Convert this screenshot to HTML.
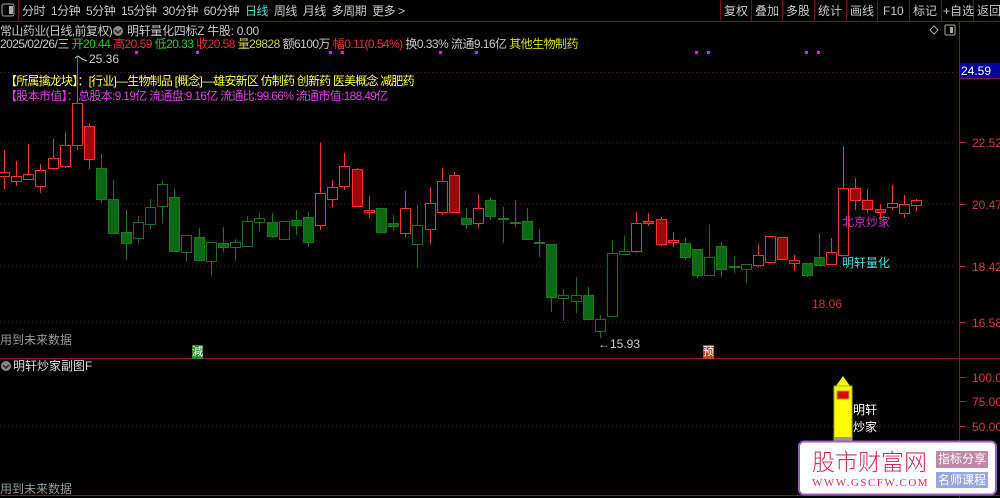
<!DOCTYPE html>
<html><head><meta charset="utf-8"><style>
html,body{margin:0;padding:0;background:#000;width:1000px;height:498px;overflow:hidden;font-family:"Liberation Sans","Noto Sans CJK SC",sans-serif;font-size:12px}
.t{position:absolute;white-space:nowrap;line-height:14px}
</style></head><body>
<svg id="s" width="1000" height="498" style="position:absolute;left:0;top:0" xmlns="http://www.w3.org/2000/svg">
<rect width="1000" height="498" fill="#000"/>
<rect x="0" y="0" width="1000" height="21" fill="#000"/>
<line x1="0" y1="21.5" x2="1000" y2="21.5" stroke="#7a1010"/>
<rect x="2" y="4" width="12" height="12" fill="none" stroke="#aaa" rx="2"/><rect x="9" y="6" width="4" height="8" fill="#aaa"/>
<line x1="18.5" y1="0" x2="18.5" y2="21" stroke="#7a1010"/>
<g stroke="#7a1010"><line x1="720.5" y1="0" x2="720.5" y2="21"/><line x1="751.5" y1="0" x2="751.5" y2="21"/><line x1="782.5" y1="0" x2="782.5" y2="21"/><line x1="814.5" y1="0" x2="814.5" y2="21"/><line x1="846.5" y1="0" x2="846.5" y2="21"/><line x1="877.5" y1="0" x2="877.5" y2="21"/><line x1="909.5" y1="0" x2="909.5" y2="21"/><line x1="941.5" y1="0" x2="941.5" y2="21"/><line x1="973.5" y1="0" x2="973.5" y2="21"/></g>
<line x1="959.5" y1="22" x2="959.5" y2="498" stroke="#8a1a1a"/>
<line x1="0" y1="358.5" x2="1000" y2="358.5" stroke="#8a1a1a"/>
<line x1="0" y1="495.5" x2="1000" y2="495.5" stroke="#8a1a1a"/>
<g stroke="#6a1a1a" stroke-dasharray="1,3">
<line x1="0" y1="72.5" x2="959" y2="72.5"/><line x1="0" y1="142.5" x2="959" y2="142.5"/><line x1="0" y1="204.5" x2="959" y2="204.5"/><line x1="0" y1="266.5" x2="959" y2="266.5"/><line x1="0" y1="322.5" x2="959" y2="322.5"/><line x1="0" y1="426.5" x2="959" y2="426.5"/>
</g>
<g stroke="#aa2a2a"><line x1="960" y1="142.5" x2="966" y2="142.5"/><line x1="960" y1="204.5" x2="966" y2="204.5"/><line x1="960" y1="266.5" x2="966" y2="266.5"/><line x1="960" y1="322.5" x2="966" y2="322.5"/><line x1="960" y1="377.5" x2="966" y2="377.5"/><line x1="960" y1="401.5" x2="966" y2="401.5"/><line x1="960" y1="426.5" x2="966" y2="426.5"/></g>
<rect x="960" y="63" width="40" height="15" fill="#0000a0"/>
<line x1="960" y1="78.5" x2="1000" y2="78.5" stroke="#8a1a1a"/>
<path d="M934 26 L938 30 L934 34 L930 30 Z" fill="none" stroke="#aaa"/>
<rect x="945" y="25" width="10" height="10" fill="none" stroke="#aaa" rx="1"/><rect x="950" y="27" width="3" height="6" fill="#aaa"/>
<circle cx="118" cy="31" r="5" fill="#888"/><path d="M115 30 L118 33 L121 30" stroke="#222" fill="none" stroke-width="1.5"/>
<circle cx="6" cy="366" r="5" fill="#888"/><path d="M3 365 L6 368 L9 365" stroke="#222" fill="none" stroke-width="1.5"/>
<g fill="#e020e0"><rect x="135" y="51" width="3" height="3"/><rect x="196" y="51" width="3" height="3"/><rect x="329" y="51" width="3" height="3"/><rect x="341" y="51" width="3" height="3"/><rect x="439" y="51" width="3" height="3"/><rect x="475" y="51" width="3" height="3"/><rect x="695" y="51" width="3" height="3"/><rect x="707" y="51" width="3" height="3"/><rect x="805" y="51" width="3" height="3"/><rect x="817" y="51" width="3" height="3"/></g>
<g id="c"></g>
<path d="M75 58 L78 56 L82 59 L87 61" stroke="#ccc" fill="none"/>
<path d="M836 386 L843 376 L850 386 Z" fill="#ffff00"/>
<rect x="834" y="386" width="18" height="54" fill="#ffff00" stroke="#aaaa00"/>
<rect x="837" y="391" width="12" height="8" fill="#dd0000" stroke="#aaaa00"/>
<rect x="834" y="437" width="18" height="4" fill="#999"/>
<rect x="799" y="441.5" width="197" height="53" rx="5" fill="#fff" stroke="#9a5cc8" stroke-width="2"/>
<rect x="936" y="451" width="52" height="17" fill="#c089a8"/>
<rect x="936" y="472" width="52" height="16" fill="#96a8e0"/>
</svg>
<div class="t" style="left:22px;top:4px;color:#c8c8c8;letter-spacing:-0.45px">分时&nbsp; 1分钟&nbsp; 5分钟&nbsp; 15分钟&nbsp; 30分钟&nbsp; 60分钟&nbsp; <span style="color:#4dd">日线</span>&nbsp; 周线&nbsp; 月线&nbsp; 多周期&nbsp; 更多 &gt;</div>
<div class="t" style="left:724px;top:4px;color:#c8c8c8">复权</div>
<div class="t" style="left:755px;top:4px;color:#c8c8c8">叠加</div>
<div class="t" style="left:786px;top:4px;color:#c8c8c8">多股</div>
<div class="t" style="left:818px;top:4px;color:#c8c8c8">统计</div>
<div class="t" style="left:850px;top:4px;color:#c8c8c8">画线</div>
<div class="t" style="left:883px;top:4px;color:#c8c8c8">F10</div>
<div class="t" style="left:913px;top:4px;color:#c8c8c8">标记</div>
<div class="t" style="left:943px;top:4px;color:#c8c8c8">+自选</div>
<div class="t" style="left:977px;top:4px;color:#c8c8c8">返回</div>
<div class="t" style="left:0;top:24px;color:#c8c8c8;letter-spacing:-0.6px">常山药业(日线,前复权)</div>
<div class="t" style="left:127px;top:24px;color:#c8c8c8;letter-spacing:-0.3px">明轩量化四标Z 牛股: 0.00</div>
<div class="t" style="left:0;top:37px;color:#c8c8c8;letter-spacing:-0.55px">2025/02/26/三 <span style="color:#2c2">开20.44</span> <span style="color:#e33">高20.59</span> <span style="color:#2c2">低20.33</span> <span style="color:#e33">收20.58</span> <span style="color:#cc4">量29828</span> 额6100万 <span style="color:#e33">幅0.11(0.54%)</span> 换0.33% 流通9.16亿 <span style="color:#dd0">其他生物制药</span></div>
<div class="t" style="left:89px;top:52px;color:#ccc">25.36</div>
<div class="t" style="left:5px;top:74px;color:#ffff40;letter-spacing:-0.8px">【所属擒龙块】：[行业]—生物制品 [概念]—雄安新区 仿制药 创新药 医美概念 减肥药</div>
<div class="t" style="left:5px;top:89px;color:#e040e0;letter-spacing:-0.7px">【股本市值】：总股本:9.19亿 流通盘:9.16亿 流通比:99.66% 流通市值:188.49亿</div>
<div class="t" style="left:961px;top:64px;color:#fff">24.59</div>
<div class="t" style="left:972px;top:136px;color:#d04040">22.52</div>
<div class="t" style="left:972px;top:198px;color:#d04040">20.47</div>
<div class="t" style="left:972px;top:260px;color:#d04040">18.42</div>
<div class="t" style="left:972px;top:316px;color:#d04040">16.58</div>
<div class="t" style="left:972px;top:371px;color:#d04040">100.0</div>
<div class="t" style="left:972px;top:395px;color:#d04040">75.00</div>
<div class="t" style="left:972px;top:420px;color:#d04040">50.00</div>
<div class="t" style="left:842px;top:215px;color:#d030d0">北京炒家</div>
<div class="t" style="left:842px;top:256px;color:#40e0e0">明轩量化</div>
<div class="t" style="left:812px;top:297px;color:#d03030">18.06</div>
<div class="t" style="left:598px;top:337px;color:#ccc">←15.93</div>
<div class="t" style="left:0;top:333px;color:#999">用到未来数据</div>
<div class="t" style="left:0;top:482px;color:#999">用到未来数据</div>
<div class="t" style="left:192px;top:345px;color:#fff;background:#2a8a2a;font-size:11px">減</div>
<div class="t" style="left:703px;top:345px;color:#fff;background:#c04020;font-size:11px">预</div>
<div class="t" style="left:13px;top:359px;color:#ddd">明轩炒家副图F</div>
<div class="t" style="left:853px;top:403px;color:#fff">明轩</div>
<div class="t" style="left:853px;top:420px;color:#fff">炒家</div>
<div class="t" style="left:812px;top:447px;color:#d03050;font-size:23px;line-height:26px;font-family:'Noto Sans CJK SC',sans-serif;font-weight:300">股市财富网</div>
<div class="t" style="left:812px;top:476px;color:#d03050;font-size:11px;font-family:'Liberation Serif',serif;letter-spacing:1.5px">WWW.GSCFW.COM</div>
<div class="t" style="left:938px;top:452px;color:#fff">指标分享</div>
<div class="t" style="left:938px;top:473px;color:#fff">名师课程</div>
<script>
var d=[['R',172,176,150,189],['R',176,181,161,186],['R',174,179,144,180],['R',170,186,164,193],['R',158,168,139,170],['R',145,166,133,168],['R',103,145,57,150],['F',126,159,123,169],['G',168,199,154,203],['G',199,233,180,233],['G',232,243,210,260],['g',222,238,216,244],['g',207,224,199,229],['g',184,206,181,223],['G',197,251,189,251],['g',235,252,235,262],['G',237,260,228,260],['g',242,261,242,276],['G',243,247,227,252],['g',242,247,239,261],['g',221,246,216,246],['g',218,222,213,231],['G',222,236,213,238],['g',221,239,221,240],['G',220,225,210,235],['G',217,242,212,247],['R',193,225,143,230],['R',187,199,180,207],['R',166,186,153,190],['F',169,206,168,207],['R',210,212,196,218],['G',208,232,208,232],['G',223,226,215,231],['R',208,233,191,237],['g',225,244,205,268],['R',203,229,187,243],['R',181,212,168,215],['F',175,212,172,213],['G',218,224,208,229],['R',208,223,194,227],['G',200,216,198,220],['G',218,219,207,243],['G',222,223,200,227],['G',221,239,208,239],['G',242,243,229,257],['G',244,297,244,312],['g',295,298,289,321],['g',295,301,277,313],['G',295,319,287,319],['g',319,331,315,338],['g',253,316,240,316],['g',251,254,235,254],['R',223,251,212,253],['F',221,223,213,226],['F',219,244,217,246],['F',240,242,232,247],['G',243,257,238,260],['G',249,275,249,278],['g',257,275,225,275],['G',246,269,242,277],['G',266,267,257,273],['g',264,269,264,283],['R',255,265,245,267],['R',236,262,236,262],['F',237,259,237,260],['R',260,263,255,271],['G',263,275,263,277],['G',257,265,234,265],['R',252,264,238,264],['R',188,255,146,255],['F',188,200,178,210],['F',200,209,189,213],['F',209,212,204,220],['R',203,207,185,210],['R',204,213,195,218],['R',200,205,199,211]];
var g=document.getElementById('c'),h='';
var col={R:'#ff3030',F:'#ff3030',G:'#1a7a1a',g:'#1f6e1f'};
var fill={R:'#000',F:'#9a0808',G:'#0a6a14',g:'#000'};
for(var i=0;i<d.length;i++){var c=d[i],x=Math.round(4+i*12.16),t=c[0];
h+='<line x1="'+(x+.5)+'" y1="'+c[3]+'" x2="'+(x+.5)+'" y2="'+c[4]+'" stroke="'+col[t]+'"/>';
var bh=Math.max(1,c[2]-c[1]);
h+='<rect x="'+(x-4.5)+'" y="'+(c[1]+.5)+'" width="10" height="'+bh+'" fill="'+fill[t]+'" stroke="'+col[t]+'"/>';}
g.innerHTML=h;
</script>
</body></html>
